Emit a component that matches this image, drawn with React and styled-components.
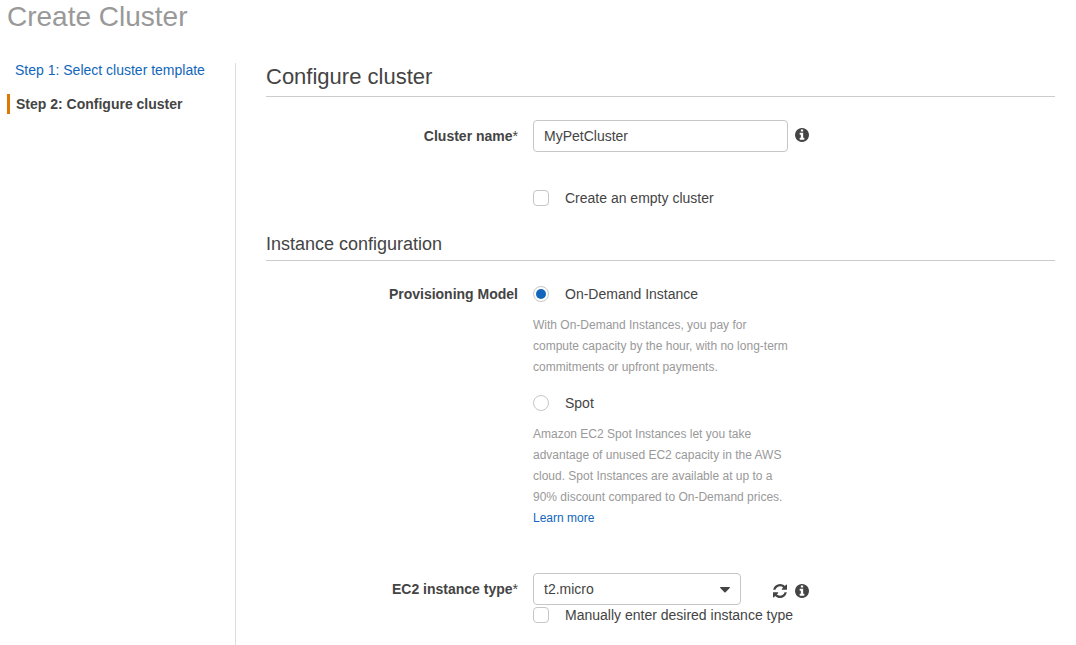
import React, { useState } from "react";
import styled, { createGlobalStyle } from "styled-components";

const GlobalStyle = createGlobalStyle`
  *, *::before, *::after { box-sizing: border-box; }
  body {
    margin: 0;
    background: #ffffff;
    color: #444444;
    font: 14px/20px "Liberation Sans", Arial, sans-serif;
  }
  input, select, button { font: inherit; color: inherit; }
  h1, h2, h3, p { margin: 0; font-weight: 400; }
`;

const Page = styled.div`
  display: flex;
  flex-direction: column;
  min-height: 100vh;
`;

const PageTitle = styled.h1`
  padding: 0 7px;
  margin-bottom: 26px;
  font-size: 28px;
  line-height: 34px;
  color: #999999;
`;

const Columns = styled.div`
  flex: 1;
  display: grid;
  grid-template-columns: 235px minmax(0, 1fr);
`;

const Steps = styled.nav`
  display: flex;
  flex-direction: column;
  gap: 14px;
  padding-left: 7px;
`;

const Link = styled.a`
  color: #1166bb;
  text-decoration: none;
  &:hover { text-decoration: underline; }
`;

const Step = styled.div`
  padding-left: ${(p) => (p.$current ? 6 : 5)}px;
  border-left: 3px solid ${(p) => (p.$current ? "#e07700" : "transparent")};
  font-weight: ${(p) => (p.$current ? 700 : 400)};
`;

const Main = styled.main`
  margin-top: 3px;
  padding: 0 21px 19px 30px;
  border-left: 1px solid #dddddd;
`;

const SectionTitle = styled.h2`
  padding-bottom: 5px;
  margin-bottom: 23px;
  border-bottom: 1px solid #cccccc;
  font-size: 22px;
  line-height: 28px;
`;

const SubsectionTitle = styled.h3`
  padding-bottom: 4px;
  margin: 24px 0 23px;
  border-bottom: 1px solid #cccccc;
  font-size: 18px;
  line-height: 24px;
`;

const FormRow = styled.div`
  display: grid;
  grid-template-columns: 252px minmax(0, 1fr);
  column-gap: 15px;
  margin-top: ${(p) => p.$space || 0}px;
`;

const FieldLabel = styled.label`
  text-align: right;
  font-weight: 700;
  line-height: ${(p) => (p.$tall ? 32 : 20)}px;
`;

const Star = styled.span`
  font-weight: 400;
`;

const Controls = styled.div`
  grid-column: 2;
`;

const Line = styled.div`
  display: flex;
  align-items: center;
`;

const TextInput = styled.input`
  width: 255px;
  height: 32px;
  padding: 0 9px 0 10px;
  border: 1px solid #c6c6c6;
  border-radius: 4px;
  background: #ffffff;
`;

const SelectBox = styled.div`
  position: relative;
  width: 208px;
  svg {
    position: absolute;
    right: 11px;
    top: 14px;
    pointer-events: none;
  }
`;

const Select = styled.select`
  display: block;
  appearance: none;
  width: 100%;
  height: 32px;
  padding: 0 28px 0 10px;
  border: 1px solid #c6c6c6;
  border-radius: 4px;
  background: #ffffff;
`;

const Tools = styled.div`
  display: flex;
  gap: 8px;
  padding-top: ${(p) => (p.$lowered ? 4 : 0)}px;
  padding-bottom: ${(p) => (p.$lowered ? 0 : 2)}px;
  margin-left: ${(p) => (p.$apart ? 32 : 7)}px;
`;

const IconButton = styled.button`
  display: block;
  width: 14px;
  height: 14px;
  padding: 0;
  border: 0;
  background: none;
  cursor: pointer;
  svg { display: block; }
`;

const Choice = styled.label`
  display: flex;
  align-items: center;
  gap: 16px;
`;

const Tick = styled.input`
  appearance: none;
  flex: none;
  width: 16px;
  height: 16px;
  margin: 0;
  padding: 2px;
  border: 1px solid #c6c6c6;
  border-radius: ${(p) => (p.type === "radio" ? "50%" : "4px")};
  background: #ffffff;
  &:checked {
    background: #1166bb content-box;
  }
`;

const Help = styled.p`
  max-width: 260px;
  margin: 11px 0 ${(p) => (p.$last ? 0 : 15)}px;
  font-size: 12px;
  line-height: 21px;
  color: #999999;
`;

const InfoIcon = () => (
  <svg width="14" height="14" viewBox="128 128 1536 1536" fill="#444444" aria-hidden="true">
    <path d="M1152 1376v-160q0-14-9-23t-23-9h-96v-512q0-14-9-23t-23-9h-320q-14 0-23 9t-9 23v160q0 14 9 23t23 9h96v320h-96q-14 0-23 9t-9 23v160q0 14 9 23t23 9h448q14 0 23-9t9-23zm-128-896v-160q0-14-9-23t-23-9h-192q-14 0-23 9t-9 23v160q0 14 9 23t23 9h192q14 0 23-9t9-23zm640 416q0 209-103 385.5t-279.5 279.5-385.5 103-385.5-103-279.5-279.5-103-385.5 103-385.5 279.5-279.5 385.5-103 385.5 103 279.5 279.5 103 385.5z" />
  </svg>
);

const RefreshIcon = () => (
  <svg width="14" height="14" viewBox="128 128 1536 1536" fill="#444444" aria-hidden="true">
    <path d="M1639 1056q0 5-1 7-64 268-268 434.5t-478 166.5q-146 0-282.5-55t-243.5-157l-129 129q-19 19-45 19t-45-19-19-45v-448q0-26 19-45t45-19h448q26 0 45 19t19 45-19 45l-137 137q71 66 161 102t187 36q134 0 250-65t186-179q11-17 53-117 8-23 30-23h192q13 0 22.5 9.5t9.5 22.5zm25-800v448q0 26-19 45t-45 19h-448q-26 0-45-19t-19-45 19-45l138-138q-148-137-349-137-134 0-250 65t-186 179q-11 17-53 117-8 23-30 23h-199q-13 0-22.5-9.5t-9.5-22.5v-7q65-268 270-434.5t480-166.5q146 0 284 55.5t245 156.5l130-129q19-19 45-19t45 19 19 45z" />
  </svg>
);

const CaretIcon = () => (
  <svg width="10" height="6" viewBox="0 0 10 6" fill="#444444" aria-hidden="true">
    <path d="M.7 0h8.6q.7 0 .7.6 0 .3-.3.5L5.6 5.3q-.6.5-1.2 0L.3 1.1Q0 .9 0 .6 0 0 .7 0z" />
  </svg>
);

export default function App() {
  const [name, setName] = useState("MyPetCluster");
  const [model, setModel] = useState("on-demand");

  return (
    <Page>
      <GlobalStyle />
      <PageTitle>Create Cluster</PageTitle>
      <Columns>
        <Steps aria-label="Steps">
          <Step>
            <Link href="#template">Step 1: Select cluster template</Link>
          </Step>
          <Step $current aria-current="step">Step 2: Configure cluster</Step>
        </Steps>
        <Main>
          <SectionTitle>Configure cluster</SectionTitle>
          <FormRow>
            <FieldLabel $tall htmlFor="cluster-name">
              Cluster name<Star>*</Star>
            </FieldLabel>
            <Line>
              <TextInput id="cluster-name" value={name} onChange={(e) => setName(e.target.value)} />
              <Tools>
                <IconButton type="button" aria-label="About the cluster name"><InfoIcon /></IconButton>
              </Tools>
            </Line>
          </FormRow>
          <FormRow $space={36}>
            <Controls>
              <Choice>
                <Tick type="checkbox" />
                Create an empty cluster
              </Choice>
            </Controls>
          </FormRow>

          <SubsectionTitle>Instance configuration</SubsectionTitle>
          <FormRow role="radiogroup" aria-labelledby="model-label">
            <FieldLabel as="div" id="model-label">Provisioning Model</FieldLabel>
            <Controls>
              <Choice>
                <Tick
                  type="radio"
                  name="model"
                  checked={model === "on-demand"}
                  onChange={() => setModel("on-demand")}
                />
                On-Demand Instance
              </Choice>
              <Help>
                With On-Demand Instances, you pay for compute capacity by the hour, with no long-term
                commitments or upfront payments.
              </Help>
              <Choice>
                <Tick
                  type="radio"
                  name="model"
                  checked={model === "spot"}
                  onChange={() => setModel("spot")}
                />
                Spot
              </Choice>
              <Help $last>
                Amazon EC2 Spot Instances let you take advantage of unused EC2 capacity in the AWS
                cloud. Spot Instances are available at up to a 90% discount compared to On-Demand
                prices. <Link href="#spot">Learn more</Link>
              </Help>
            </Controls>
          </FormRow>

          <FormRow $space={44}>
            <FieldLabel $tall htmlFor="instance-type">
              EC2 instance type<Star>*</Star>
            </FieldLabel>
            <Controls>
              <Line>
                <SelectBox>
                  <Select id="instance-type" defaultValue="t2.micro">
                    <option>t2.micro</option>
                  </Select>
                  <CaretIcon />
                </SelectBox>
                <Tools $apart $lowered>
                  <IconButton type="button" aria-label="Refresh instance types"><RefreshIcon /></IconButton>
                  <IconButton type="button" aria-label="About instance types"><InfoIcon /></IconButton>
                </Tools>
              </Line>
              <Choice>
                <Tick type="checkbox" />
                Manually enter desired instance type
              </Choice>
            </Controls>
          </FormRow>
        </Main>
      </Columns>
    </Page>
  );
}
